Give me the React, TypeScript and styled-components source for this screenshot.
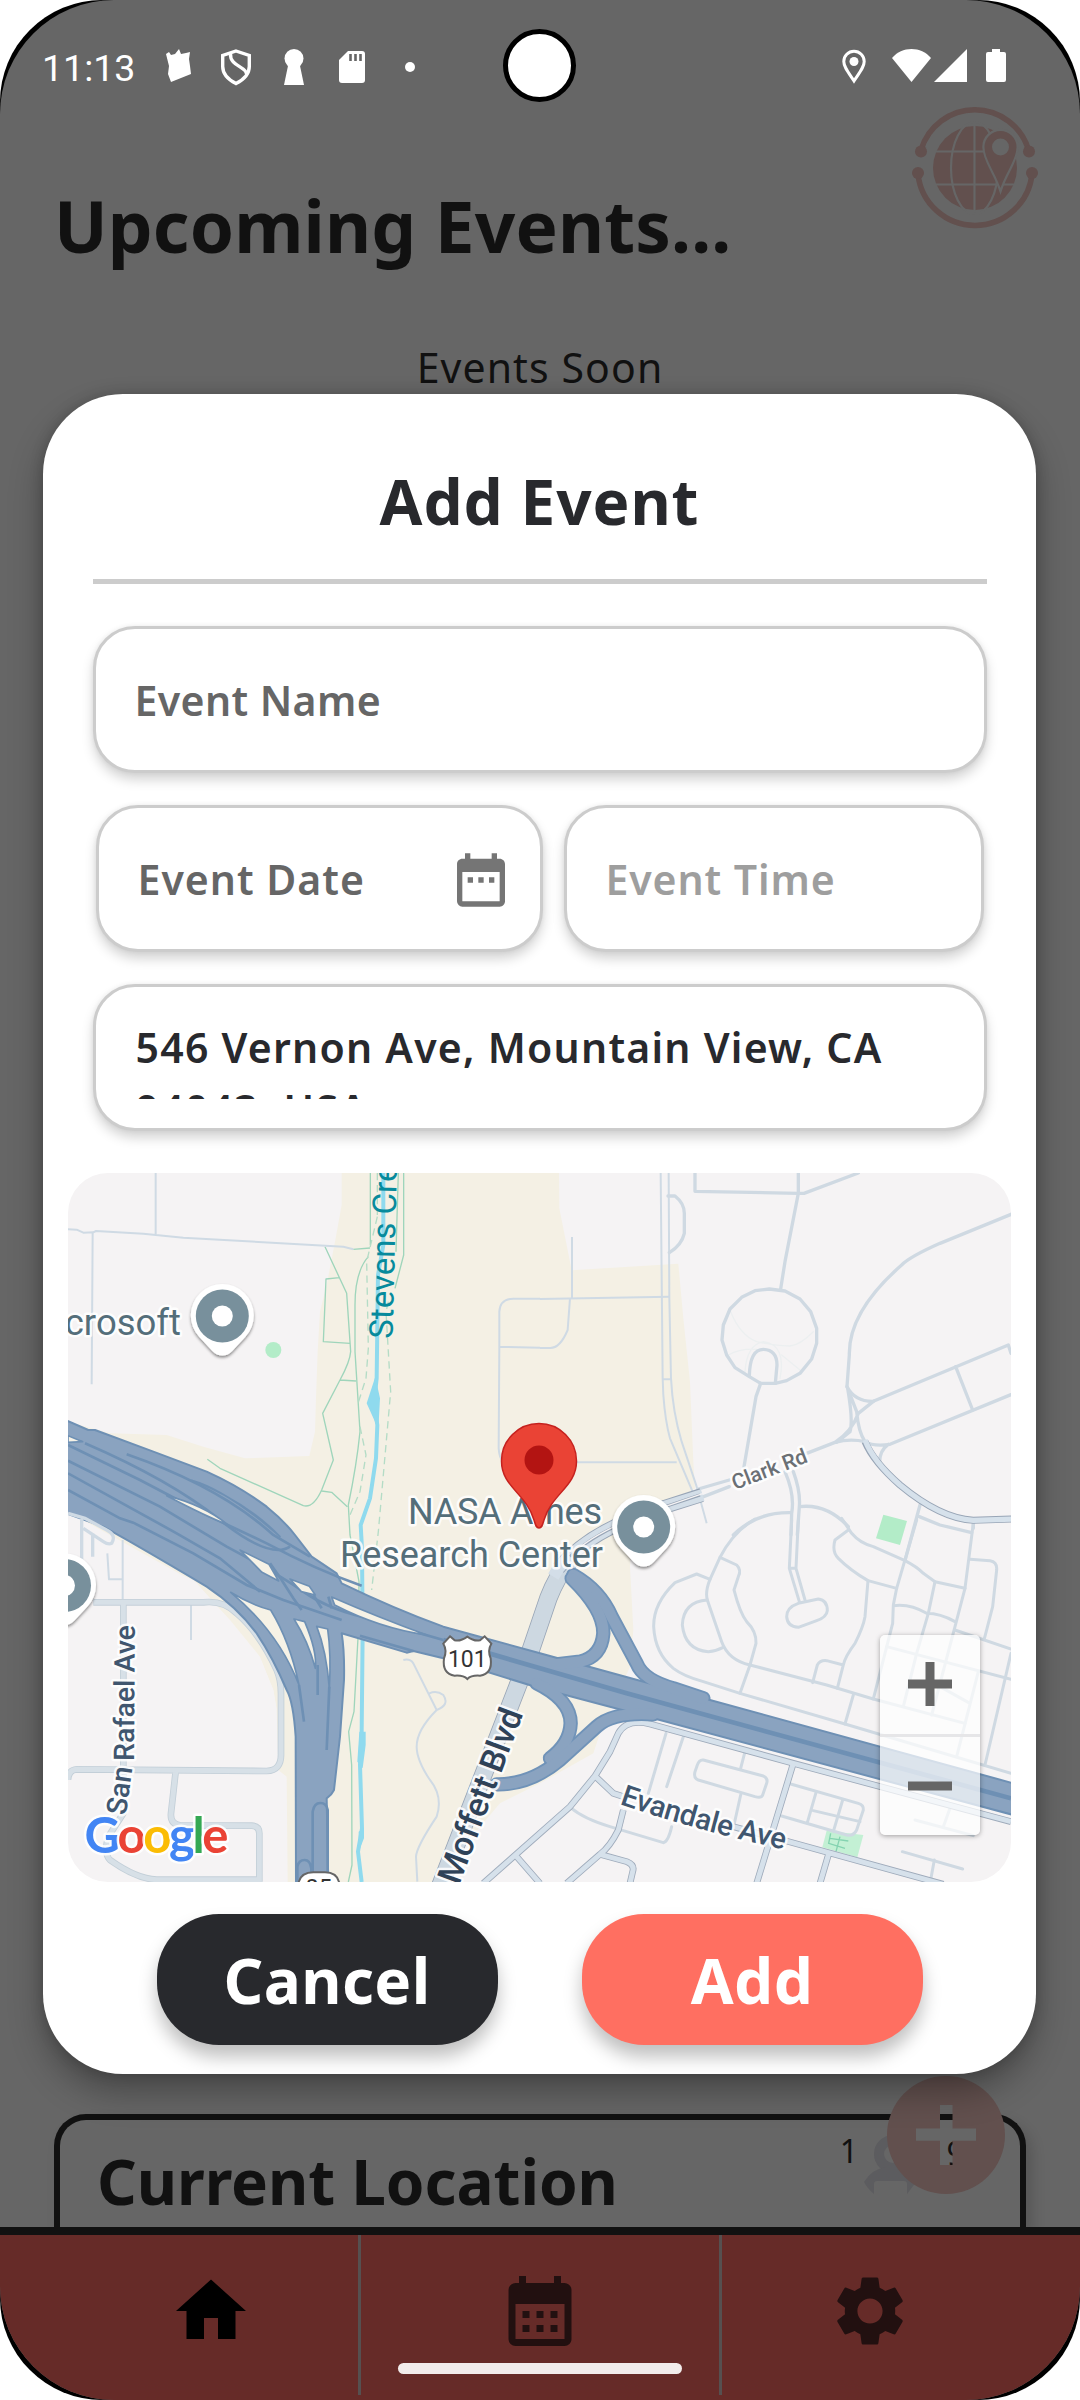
import React from "react";
import styled, { createGlobalStyle } from "styled-components";
import { MdHome, MdCalendarMonth, MdSettings, MdDateRange } from "react-icons/md";

const GlobalStyle = createGlobalStyle`
  * { box-sizing: border-box; }
  html, body { margin: 0; padding: 0; background: #fff; }
`;

const Device = styled.div`
  position: relative;
  width: 1080px;
  height: 2400px;
  background: #000;
  border-radius: 102px;
  overflow: hidden;
  font-family: "Noto Sans", "Open Sans", sans-serif;
`;

const Screen = styled.div`
  position: relative;
  display: flex;
  flex-direction: column;
  width: 1080px;
  height: 2400px;
  border-radius: 114px;
  overflow: hidden;
  background: #666;
  color: #111;
`;

const StatusBar = styled.div`
  display: flex;
  justify-content: space-between;
  align-items: center;
  height: 134px;
  padding: 0 74px 0 42px;
  flex: none;
`;

const StatusGroup = styled.div`
  display: flex;
  align-items: center;
`;

const Clock = styled.span`
  font-family: Roboto, sans-serif;
  font-size: 37.5px;
  line-height: 44px;
  width: 92px;
  padding-top: 1px;
  color: #fff;
  white-space: nowrap;
`;

const Glyph = styled.svg<{ $w: number; $gap: number }>`
  display: block;
  width: ${(p) => p.$w}px;
  height: 36px;
  margin-left: ${(p) => p.$gap}px;
  overflow: visible;
`;

const Camera = styled.div`
  position: absolute;
  left: 503px;
  top: 29px;
  width: 73px;
  height: 73px;
  border-radius: 50%;
  border: 5px solid #000;
  background: #fff;
`;

const Header = styled.header`
  display: flex;
  align-items: center;
  height: 184px;
  padding-left: 54px;
  flex: none;
`;

const PageTitle = styled.h1`
  margin: 0;
  font-size: 71px;
  line-height: 90px;
  font-weight: 700;
  letter-spacing: 0.15px;
  white-space: nowrap;
`;

const BrandMark = styled.svg`
  position: absolute;
  left: 905px;
  top: 100px;
  width: 140px;
  height: 136px;
`;

const Upcoming = styled.p`
  margin: 19px 0 0;
  text-align: center;
  font-size: 41px;
  line-height: 60px;
  letter-spacing: 1.1px;
  flex: none;
`;

const Spacer = styled.div`
  flex: 1;
`;

const LocationCard = styled.section`
  display: flex;
  justify-content: space-between;
  height: 113px;
  margin: 0 54px;
  padding: 18px 162px 0 37px;
  border: 6px solid #111;
  border-bottom: 0;
  border-radius: 32px 32px 0 0;
  box-shadow: 6px 8px 14px rgba(0, 0, 0, 0.16);
  flex: none;
`;

const CardTitle = styled.h2`
  margin: 2px 0 0;
  font-size: 62px;
  line-height: 82px;
  font-weight: 700;
  letter-spacing: -0.05px;
  white-space: nowrap;
`;

const CardCount = styled.span`
  font-size: 32px;
  line-height: 26px;
`;

const AddFab = styled.svg`
  position: absolute;
  left: 860px;
  top: 2070px;
  width: 150px;
  height: 130px;
`;

const Nav = styled.nav`
  display: grid;
  grid-template-columns: 358px 361px 1fr;
  height: 173px;
  border-top: 8px solid #111;
  background: #662b28;
  padding-bottom: 5px;
  flex: none;
`;

const NavItem = styled.div<{ $active?: boolean; $before?: number; $after?: number }>`
  display: flex;
  justify-content: center;
  padding: 34px ${(p) => p.$after ?? 0}px 0 ${(p) => p.$before ?? 0}px;
  font-size: 84px;
  color: ${(p) => (p.$active ? "#000" : "#221010")};
  & + & {
    border-left: 3px solid #565050;
  }
`;

const HomeHandle = styled.div`
  position: absolute;
  left: 398px;
  top: 2363px;
  width: 284px;
  height: 11px;
  border-radius: 6px;
  background: #f2eceb;
`;

const ModalLayer = styled.div`
  position: absolute;
  inset: 0;
  display: flex;
  justify-content: center;
  align-items: flex-start;
  padding: 394px 1px 0 0;
`;

const Modal = styled.div`
  display: flex;
  flex-direction: column;
  align-items: center;
  width: 993px;
  height: 1680px;
  border-radius: 80px;
  background: #fff;
  color: #28292d;
  box-shadow: 0 18px 34px rgba(0, 0, 0, 0.3), 0 0 14px rgba(0, 0, 0, 0.18);
`;

const ModalTitle = styled.h2`
  margin: 67px 0 0;
  font-size: 62px;
  line-height: 80px;
  font-weight: 700;
  letter-spacing: 0.9px;
`;

const Divider = styled.div`
  width: 894px;
  height: 5px;
  margin-top: 38px;
  background: #ccc;
`;

const Form = styled.div`
  display: flex;
  flex-direction: column;
  align-items: center;
  width: 894px;
  gap: 32px;
  margin-top: 42px;
`;

const FieldRow = styled.div`
  display: flex;
  width: 888px;
  gap: 21px;
`;

const Field = styled.div<{ $w: number; $color: string; $tracking: number; $top?: boolean }>`
  display: flex;
  align-items: ${(p) => (p.$top ? "flex-start" : "center")};
  justify-content: space-between;
  width: ${(p) => p.$w}px;
  height: 147px;
  padding: ${(p) => (p.$top ? "29px" : "0")} 27px 0 39px;
  border: 3px solid #ccc;
  border-radius: 42px;
  background: #fff;
  color: ${(p) => p.$color};
  font-size: 41px;
  font-weight: 600;
  line-height: 62px;
  letter-spacing: ${(p) => p.$tracking}px;
  box-shadow: 0 7px 12px rgba(0, 0, 0, 0.17), 0 0 5px rgba(0, 0, 0, 0.06);
`;

const Address = styled.div`
  width: 800px;
  height: 83px;
  padding-left: 1px;
  overflow: hidden;
`;

const CalendarIcon = styled(MdDateRange)`
  font-size: 64px;
  margin-top: 2px;
  color: #757575;
`;

const MapBox = styled.div`
  position: relative;
  width: 943px;
  height: 709px;
  margin-top: 42px;
  border-radius: 40px;
  overflow: hidden;
  background: #f5f3f4;
`;

const MapDrawing = styled.svg`
  display: block;
  width: 943px;
  height: 709px;
  font-family: Roboto, sans-serif;
`;

const ZoomPanel = styled.div`
  position: absolute;
  right: 31px;
  bottom: 47px;
  display: flex;
  flex-direction: column;
  width: 100px;
  height: 200px;
  border-radius: 5px;
  background: rgba(255, 255, 255, 0.7);
  box-shadow: 0 1px 5px rgba(0, 0, 0, 0.35);
`;

const ZoomButton = styled.div`
  display: flex;
  align-items: center;
  justify-content: center;
  flex: 1;
  & + & {
    border-top: 3px solid #e6e6e8;
  }
`;

const Actions = styled.div`
  display: flex;
  gap: 84px;
  margin-top: 32px;
`;

const ActionButton = styled.button<{ $bg: string }>`
  width: 341px;
  height: 131px;
  border: 0;
  border-radius: 62px;
  background: ${(p) => p.$bg};
  color: #fff;
  font-family: inherit;
  font-size: 62px;
  font-weight: 700;
  line-height: 80px;
  letter-spacing: 0.4px;
  padding: 0;
  box-shadow: 0 12px 18px rgba(0, 0, 0, 0.25);
`;

function StatusIcons() {
  return (
    <StatusGroup>
      <Clock>11:13</Clock>
      <Glyph $w={25} $gap={32} viewBox="0 0 25 36" fill="#fff">
        <path d="M0 5l3-2 2 3 4-1 4-5 2 5 5-1 4-1-1 7 1 7 1 8-20 8-3-8 1-8z" />
      </Glyph>
      <Glyph $w={30} $gap={30} viewBox="0 0 30 36" fill="none" stroke="#fff" strokeWidth="3.400">
        <path d="M15 2L28.300 6.500v11c0 8-5.300 13-13.300 17C7 30.500 1.700 25.500 1.700 17.500v-11z" />
        <path d="M9.500 4.500c-1 13 16 13 16 20.500" />
      </Glyph>
      <Glyph $w={20} $gap={33} viewBox="0 0 20 36" fill="#fff">
        <circle cx="10" cy="9.5" r="9.5" />
        <path d="M5 12h10l5 24H0z" />
      </Glyph>
      <Glyph $w={26} $gap={35} viewBox="0 0 26 36" fill="#fff">
        <path d="M9 2h14a3 3 0 013 3v26a3 3 0 01-3 3H3a3 3 0 01-3-3V11z" />
        <path d="M11.5 5v7M16.500 5v7M21.500 5v7" stroke="#666" strokeWidth="2.600" />
      </Glyph>
      <Glyph $w={10} $gap={40} viewBox="0 0 10 36" fill="#fff">
        <circle cx="5" cy="18" r="5" />
      </Glyph>
    </StatusGroup>
  );
}

function SystemIcons() {
  return (
    <StatusGroup>
      <Glyph $w={24} $gap={0} viewBox="0 0 24 36">
        <path d="M12 32C6 23 1.800 18 1.800 12.500a10.200 10.200 0 0120.400 0C22.200 18 18 23 12 32z" fill="none" stroke="#fff" strokeWidth="3" />
        <circle cx="12" cy="12.500" r="4.500" fill="#fff" />
      </Glyph>
      <Glyph $w={39} $gap={26} viewBox="0 0 39 36" fill="#fff">
        <path d="M0 9C5 3 12 0 19.500 0S34 3 39 9L19.500 33z" />
      </Glyph>
      <Glyph $w={33} $gap={3} viewBox="0 0 33 36" fill="#fff">
        <path d="M33 0v33H0z" />
      </Glyph>
      <Glyph $w={20} $gap={19} viewBox="0 0 20 36" fill="#fff">
        <path d="M6 0h8v3h4a2 2 0 012 2v26a2 2 0 01-2 2H2a2 2 0 01-2-2V5a2 2 0 012-2h4z" />
      </Glyph>
    </StatusGroup>
  );
}

function Brand() {
  return (
    <BrandMark viewBox="905 100 140 136">
      <g fill="none" stroke="#62504e" strokeWidth="5.600">
        <path d="M921 150A56 56 0 011028.500 150" />
        <path d="M918 174A57.300 57.300 0 001032 174" />
      </g>
      <g fill="#62504e">
        <circle cx="921" cy="151.500" r="6" />
        <circle cx="1029" cy="151.500" r="6" />
        <circle cx="918" cy="173" r="6" />
        <circle cx="1032" cy="173" r="6" />
        <circle cx="975" cy="168" r="42" />
      </g>
      <g fill="none" stroke="#666" strokeWidth="2.200">
        <path d="M974.500 125v86M931 151.500h88M931 184.500h88" />
        <ellipse cx="974.500" cy="168" rx="23.500" ry="46" />
      </g>
      <path
        d="M1000.500 188C995 172 984.500 159 984.500 147a16 16 0 0132 0C1016.500 159 1006 172 1000.500 188z"
        fill="#62504e"
        stroke="#666"
        strokeWidth="4.500"
        paintOrder="stroke"
      />
      <circle cx="1000.500" cy="147" r="8.500" fill="#666" />
    </BrandMark>
  );
}

function Fab() {
  return (
    <AddFab viewBox="860 2070 150 130">
      <defs>
        <mask id="plusCut">
          <rect x="860" y="2070" width="150" height="130" fill="#fff" />
          <path d="M940 2105h12.500v23.500H976v12.200h-23.500V2165H940v-24.300h-24v-12.200h24z" fill="#000" />
        </mask>
      </defs>
      <circle cx="893" cy="2154" r="14" fill="none" stroke="#5c5c5f" strokeWidth="10" />
      <path d="M864 2182q8-13 22-15h12q12 2 18 15l-9 12v-10q0-3-3-3h-27q-3 0-3 3v10q-7-6-10-12z" fill="#5c5c5f" />
      <text x="946.500" y="2165" fontSize="32" fill="#111">9</text>
      <circle cx="946" cy="2135" r="59" fill="#62504e" mask="url(#plusCut)" />
    </AddFab>
  );
}

const MINOR = [
  "M287 24V210M24 193L50 194L70 203L100 202L108 198L250 206L370 218L850 245L880 253M98 202L95 658",
  "M1440 401H1360Q1320 401 1318 440V545L1440 548M1318 545L1316 850Q1318 880 1330 890",
  "M1440 402L1828 395M1536 216V400M1530 400L1523 495Q1500 550 1470 549H1440",
  "M1802 24L1808 640L1810 690Q1816 770 1830 820L1900 985M1826 24L1828 400L1833 640Q1838 740 1865 830L1910 965L1940 1075M1808 643H1833M1550 892H1850",
  "M188 1125V1305M142 1165L147 1243H190M393 1320V1425",
  "M1030 1485Q1050 1480 1060 1495L1130 1635Q1070 1695 1070 1745Q1070 1785 1110 1845Q1150 1895 1130 1955Q1070 2045 1068 2075L1072 2150M1108 1585Q1130 1575 1150 1590Q1170 1620 1130 1635",
];

const STREETS_NORTH = [
  "M384 93H405Q433 115 433 145V205Q425 240 388 263M465 24V79L775 85H792L955 24M775 24V85L735 290L722 372",
  "M688 372L735 378L780 402L812 440L830 490V535L815 582L780 625L740 647L706 655H662L628 635L585 608L560 570L546 525L550 480L570 432L605 397L645 377Z",
  "M628 632Q630 553 670 553Q711 555 711 600L706 655M662 655L648 695L612 905",
  "M1413 148L1200 235Q1110 275 1085 300Q925 440 928 570L921 665Q945 710 1000 709L1405 540L1413 565M1247 605L1298 735",
  "M1413 689L1050 838Q1000 845 975 830Q930 820 885 832L800 865M921 665L950 740Q955 800 975 830M1000 709L955 745Q935 800 885 832M923 670Q940 770 930 800L890 832M1045 838Q1015 860 1020 900",
  "M735 920Q765 990 755 1045L753 1110M760 920Q782 980 778 1025L772 1110M1140 1020L1095 1187M1138 1055L1200 1080L1295 1103M1300 1073V1090M755 1043Q650 1040 580 1110M778 1025Q860 1015 925 1085",
  "M568 945L475 972M568 965L485 997",
];

const STREETS_SOUTH = [
  "M755 0L748 145L778 245M775 0L768 145L795 240M748 145H768M740 290Q740 262 775 250L835 237Q862 240 862 272Q860 292 830 302L775 322Q742 320 740 290",
  "M645 -3Q580 35 540 112L510 178Q495 215 502 240L545 365Q565 420 630 435L860 495L1000 537L1275 610",
  "M540 112L590 135Q605 150 595 170L582 210Q600 280 620 305Q650 335 648 370L630 435L600 520",
  "M510 178L470 162L405 188Q340 250 341 320Q345 400 400 445Q430 468 490 485L600 520L915 612L1413 760",
  "M502 240Q430 245 427 315Q435 390 505 395Q530 393 548 383M915 612L940 525M818 488L832 435Q840 420 860 422L910 435L892 505M910 435Q915 410 945 370Q970 320 975 290L984 182",
  "M905 -5L935 40Q960 70 1000 80L1095 122Q1130 140 1150 160L1185 185L1275 205M925 30L885 60Q875 95 895 115Q930 150 984 182L1070 205",
  "M1130 0L1070 205L1060 255L1058 310L1000 537M1060 257Q1110 250 1160 280Q1200 280 1245 305M1185 185L1165 280L1130 400L1090 560M1300 10L1275 205L1245 320L1175 585",
  "M1290 118L1350 122Q1372 125 1370 150L1358 260L1333 357M1245 330L1413 387M1040 380L1413 478M1413 400L1335 735M1315 455L1250 710M1200 500L1290 550",
  "M615 695L602 745M490 720L670 768Q685 775 680 790L668 825Q665 835 645 830L475 780Q460 775 465 755L472 735Q478 718 490 720M602 825L582 915",
  "M378 640L325 820M430 650L380 800M95 865Q130 895 210 920L370 968Q385 965 395 920",
  "M752 792L955 850Q972 855 970 870L950 930Q940 950 920 945L725 888M828 818L802 908M908 840L880 935M820 872L960 905M1087 995L1268 1047M1183 1020L1172 1080M1125 900L1300 947M1230 865L1210 920",
];

const CASED_SOUTH = [
  "M1413 905L760 730L330 612Q260 595 235 640L210 695L165 768L90 860L-170 1090",
  "M165 768L220 820L250 830M760 730L650 1090M1210 1093L735 962M580 920L735 962M865 1005L840 1090M250 870L235 930Q210 980 180 1003L80 1090M180 1003L260 1025Q285 1035 278 1055L270 1090M-70 1010L0 1090",
];

const CASED_WEST =
  "M100 1312H430Q490 1305 530 1345Q600 1405 650 1515Q663 1545 663 1585V1765Q665 1817 620 1818L50 1813Q25 1815 24 1845M190 1312V1813M347 1820L333 1945Q330 1977 360 1981L575 1982Q598 1983 598 2005V2150M190 1813V1945L145 2015Q130 2065 150 2085Q230 2142 290 2144H600";

const PARKING_WEST = "M24 1045L75 1060L140 1095Q170 1110 155 1135Q145 1140 130 1130L70 1090M65 1060V1190M98 1105V1175";

const TRAILS =
  "M931 24V240M1031 24V270L1005 370M1015 24L1008 260M795 245L860 385L872 560Q870 590 840 645L788 745L820 885L785 975Q760 1030 730 1022L480 910L442 883M838 338L798 342L790 530L870 535M880 253L930 249M925 275Q885 320 885 420V560L900 800Q890 900 865 1020L870 1110L897 1250L895 1400L882 1640L866 1700L875 1800L876 2100L865 2151M840 645L888 648M785 978L815 982L862 1025";

const HIGHWAY =
  "M10 762L85 795H105L280 860L440 920Q540 965 620 1025Q670 1065 705 1110L755 1175L830 1225L845 1255Q1000 1330 1150 1385L1440 1465L1950 1605L2860 1855V1950L1780 1660L1440 1570L1150 1480L1060 1458L1040 1463L845 1405Q854 1460 852 1545L840 1715L822 1875Q815 1890 800 1900L805 2160H708L707 1715Q700 1610 680 1575Q640 1480 590 1405Q530 1325 440 1265Q340 1205 210 1130L130 1085L10 1042Z";

const MOFFETT = "M1138 2170L1380 1545L1414 1450L1465 1300Q1490 1235 1530 1185";

const GAPS = [
  "M24 812L68 830L24 832Z",
  "M395 946Q500 975 660 1115Q560 1010 395 946Z",
  "M320 992Q430 1020 502 1078Q440 1055 320 992Z",
  "M540 1155L627 1198L656 1248L606 1222Z",
  "M690 1242L748 1264L766 1290L724 1280Z",
  "M815 1296Q950 1355 1100 1410Q960 1390 824 1320Z",
  "M512 1282Q570 1318 632 1335Q690 1430 717 1560Q655 1400 512 1282Z",
  "M702 1362L734 1370Q772 1460 766 1510Q745 1430 702 1362Z",
  "M770 1384L803 1392Q814 1470 808 1570Q800 1460 770 1384Z",
];

const LANES = [
  "M75 835Q330 945 480 1065T690 1145",
  "M24 840L240 945L440 1050L620 1135Q770 1215 905 1262",
  "M24 887L300 1025L500 1145Q660 1230 730 1280T905 1355L1150 1425",
  "M24 925L350 1105L480 1180L600 1280",
  "M24 975L180 1060L220 1073L400 1165L560 1260L670 1305L845 1365",
  "M200 868Q480 965 640 1110L750 1175",
  "M630 1195L665 1245L700 1300L725 1335",
  "M760 1290L785 1330M805 1295L815 1330",
  "M717 1560L732 1670M773 1500V1590M808 1565L800 1755",
  "M1060 1458L900 1412",
];

const RAMPS = [
  "M1540 1230Q1620 1275 1655 1355L1730 1495Q1750 1545 1840 1570L1930 1600",
  "M1535 1240Q1632 1335 1630 1405Q1625 1475 1560 1490L1490 1498",
  "M1430 1555Q1532 1605 1532 1675Q1530 1735 1470 1780",
  "M1310 1858Q1410 1860 1500 1785L1610 1685Q1660 1640 1780 1648",
];

function Poi({ x, y }: { x: number; y: number }) {
  return (
    <g transform={`translate(${x} ${y})`}>
      <path
        d="M0 39.500C-4 39.500-7 38-10 35L-23 21A31.500 31.500 0 1123 21L10 35C7 38 4 39.500 0 39.500z"
        fill="#fff"
        filter="url(#pinShadow)"
      />
      <circle r="26.500" fill="#78909c" />
      <circle r="10.500" fill="#fff" />
    </g>
  );
}

function MapView() {
  const halo = { stroke: "#fff", strokeWidth: 5, strokeOpacity: 0.85, paintOrder: "stroke", strokeLinejoin: "round" } as const;
  return (
    <MapBox>
      <MapDrawing viewBox="68 1173 943 709">
        <defs>
          <filter id="pinShadow" x="-30%" y="-30%" width="160%" height="160%">
            <feDropShadow dx="0" dy="2" stdDeviation="1.600" floodOpacity="0.45" />
          </filter>
          <path id="rafael" d="M126 1816Q130 1785 134 1758L135 1600" />
          <path id="evandale" d="M619.500 1804Q700 1832 805 1854" />
        </defs>
        <g transform="translate(60 1165) scale(0.33333)">
          <path
            d="M845 24V120L825 230L800 360L780 440L773 560L768 700L765 800L748 873L555 880L430 845L320 810L150 805L24 770V1090L400 1245L510 1365L600 1475L640 1575L650 1635L655 1815L680 1835L683 2151H1120L1320 1915L1440 1855L1600 1765L1620 1705L1710 1505L1720 1395L1710 1205L1715 1110L1905 970L1900 890L1890 650L1870 460L1855 296L1535 316L1498 130L1497 24Z"
            fill="#f4f0e4"
          />
          <path d="M24 1040L410 1255L520 1380L600 1480L640 1575L650 1635H24Z" fill="#f5f3f4" />
          <circle cx="640" cy="555" r="24" fill="#b3ecc8" />
          <path d="M2470 1049L2541 1068L2520 1140L2448 1120Z" fill="#b3ecc8" />
          <path d="M2300 1997L2410 2010L2392 2077L2287 2047Z" fill="#c3f0d4" />
          <path d="M2312 2005L2306 2035L2355 2050M2310 2020L2365 2028M2340 2015L2328 2060" stroke="#84d3b0" strokeWidth="4" fill="none" />
          <path d="M970 24V240L954 330L950 640L942 715L952 780L948 880L930 1000L902 1080L906 1150L908 1400L905 1700L900 1800L906 1990L894 2060L905 2151" stroke="#8fdaee" strokeWidth="12" fill="none" />
          <path d="M946 635L960 700L956 775L945 770L920 715ZM898 1700H917V1740L908 1810L892 1790ZM896 2000L912 1990V2020L896 2060Z" fill="#8fdaee" />
          <path d={TRAILS} stroke="#9fd5bb" strokeWidth="4" fill="none" strokeLinejoin="round" />
          <path d="M952 155L920 290L925 550L918 640L895 712M985 410L978 440L992 680L955 1100L935 1275M900 785L918 870L900 980L865 1062M952 24V150" stroke="#b4dcc6" strokeWidth="4" strokeDasharray="22 14" fill="none" />

          <g fill="none" stroke="#cfdae4" strokeWidth="6" strokeLinejoin="round">
            {MINOR.map((d) => <path key={d} d={d} />)}
          </g>
          <g fill="none" stroke="#cfd9e2" strokeWidth="10" strokeLinejoin="round" strokeLinecap="round">
            <g transform="translate(1440 0)">
              <path d="M572 440Q600 510 650 530Q690 540 750 543Q780 540 820 500M565 570Q600 550 650 553M725 570L780 615M615 620Q620 540 670 530Q740 540 720 640" stroke="#eceff0" strokeWidth="4" />
              {STREETS_NORTH.map((d) => <path key={d} d={d} />)}
            </g>
            <g transform="translate(1440 1065)" strokeWidth="9">
              {STREETS_SOUTH.map((d) => <path key={d} d={d} />)}
            </g>
          </g>

          <g fill="none" strokeLinejoin="round">
            <path d={CASED_WEST} stroke="#c3cfd8" strokeWidth="20" />
            <path d={CASED_WEST} stroke="#d7e0e7" strokeWidth="15" />
            <g transform="translate(1440 1065)">
              {CASED_SOUTH.map((d) => <path key={d} d={d} stroke="#9fabbb" strokeWidth="20" />)}
            </g>
            <g transform="translate(1440 1065)">
              {CASED_SOUTH.map((d) => <path key={d} d={d} stroke="#d6e1eb" strokeWidth="15" />)}
            </g>
            <path d="M2415 830Q2440 890 2520 960Q2640 1060 2740 1066L2860 1062" stroke="#98a5b6" strokeWidth="21" />
            <path d="M2415 825Q2440 890 2520 960Q2640 1060 2740 1066L2860 1062" stroke="#d6e1eb" strokeWidth="16" />
          </g>

          <g fill="none">
            <path d={MOFFETT} stroke="#98a5b6" strokeWidth="55" />
            <path d={MOFFETT} stroke="#cdd8e1" strokeWidth="50" />
          </g>

          <g fill="none" strokeLinejoin="round">
            {RAMPS.map((d) => <path key={d} d={d} stroke="#7093b8" strokeWidth="43" strokeLinecap="round" />)}
          </g>
          <path d={HIGHWAY} fill="#8aa3c0" stroke="#6e90b4" strokeWidth="6" strokeLinejoin="round" />
          <g fill="none">
            {RAMPS.map((d) => <path key={d} d={d} stroke="#8aa3c0" strokeWidth="32" strokeLinecap="round" />)}
          </g>
          <g fill="none" stroke="#6e90b4" strokeWidth="8">
            {LANES.map((d) => <path key={d} d={d} />)}
            <path d="M1150 1425L1440 1510L1700 1585L2853 1900" strokeWidth="14" />
            <path d="M758 2150V1940Q762 1914 781 1914Q800 1914 803 1935V2150M712 2150V2105Q716 2085 734 2085Q750 2085 754 2110V2150" />
          </g>
          <g fill="#f6f2e6" stroke="#6e90b4" strokeWidth="5" strokeLinejoin="round">
            {GAPS.map((d) => <path key={d} d={d} />)}
          </g>
          <path d={PARKING_WEST} fill="none" stroke="#cfdae4" strokeWidth="10" />

          <g fill="none">
            <path d="M1495 1210Q1590 1095 1800 1030L1925 990" stroke="#98a5b6" strokeWidth="42" />
            <path d="M1480 1235L1495 1210Q1590 1095 1800 1030L1928 990" stroke="#d3dee8" strokeWidth="36" />
            <path d="M1530 1175Q1610 1095 1800 1030L1920 990" stroke="#98a5b6" strokeWidth="9" />
            <path d="M1540 1165Q1610 1095 1800 1030L1930 985" stroke="#f5f3f4" strokeWidth="4" />
          </g>

          <g transform="translate(1222 1480)">
            <path
              d="M-52 -66L-38 -54Q-20 -50 0 -65Q20 -50 38 -54L52 -66L72 -44Q60 -24 70 0Q76 46 38 52Q12 50 0 62Q-12 50 -38 52Q-76 46 -70 0Q-60 -24 -72 -44Z"
              fill="#fff"
              stroke="#666"
              strokeWidth="6"
            />
            <text x="0" y="25" fontSize="69" textAnchor="middle" fill="#333">101</text>
          </g>
          <path d="M715 2155Q722 2122 760 2122H795Q832 2122 838 2155Z" fill="#fff" stroke="#666" strokeWidth="6" />
          <text x="776" y="2192" fontSize="70" textAnchor="middle" fill="#333">85</text>
        </g>

        <g fill="#546e7a" fontSize="36" {...halo}>
          <text x="181" y="1335" textAnchor="end" fontSize="36.500">crosoft</text>
          <text x="408" y="1524" textLength="194">NASA Ames</text>
          <text x="340" y="1567" textLength="263">Research Center</text>
        </g>
        <text transform="translate(392.500 1339) rotate(-88.500)" fontSize="33" fill="#078a9c">Stevens Cre</text>
        <g fontWeight="500" {...halo}>
          <text fontSize="28.500" fill="#40566f"><textPath href="#rafael">San Rafael Ave</textPath></text>
          <text fontSize="29.500" fill="#40566f"><textPath href="#evandale" textLength="171">Evandale Ave</textPath></text>
          <text transform="translate(459 1886) rotate(-69.500)" fontSize="34" fill="#2f4258" textLength="184">Moffett Blvd</text>
          <text transform="translate(735 1490) rotate(-21)" fontSize="21" fill="#6b7075">Clark Rd</text>
        </g>

        <Poi x={222.300} y={1316} />
        <Poi x={643.700} y={1527} />
        <Poi x={64.500} y={1585.500} />

        <path
          d="M539 1528C536 1528 535.500 1525 534 1520C526 1493 501.500 1487 501.500 1461A37.500 37.500 0 01576.500 1461C576.500 1487 552 1493 544 1520C542.500 1525 542 1528 539 1528z"
          fill="#ea4335"
          stroke="#c5221f"
          strokeWidth="1.500"
        />
        <circle cx="539" cy="1460" r="14.500" fill="#b31412" />

        <text x="84.500" y="1852.500" fontFamily="Lato, sans-serif" fontSize="49" fontWeight="700" textLength="144" {...halo}>
          <tspan fill="#4285f4">G</tspan>
          <tspan fill="#ea4335">o</tspan>
          <tspan fill="#fbbc04">o</tspan>
          <tspan fill="#4285f4">g</tspan>
          <tspan fill="#34a853">l</tspan>
          <tspan fill="#ea4335">e</tspan>
        </text>
      </MapDrawing>
      <ZoomPanel>
        <ZoomButton>
          <svg width="44" height="44" viewBox="0 0 44 44"><path d="M22 0v44M0 22h44" stroke="#666" strokeWidth="9" /></svg>
        </ZoomButton>
        <ZoomButton>
          <svg width="44" height="44" viewBox="0 0 44 44"><path d="M0 22h44" stroke="#666" strokeWidth="9" /></svg>
        </ZoomButton>
      </ZoomPanel>
    </MapBox>
  );
}

export default function App() {
  return (
    <>
      <GlobalStyle />
      <Device>
        <Screen>
          <StatusBar>
            <StatusIcons />
            <SystemIcons />
          </StatusBar>
          <Header>
            <PageTitle>Upcoming Events...</PageTitle>
          </Header>
          <Upcoming>Events Soon</Upcoming>
          <Spacer />
          <LocationCard>
            <CardTitle>Current Location</CardTitle>
            <CardCount>1</CardCount>
          </LocationCard>
          <Nav>
            <NavItem $active $before={64}><MdHome /></NavItem>
            <NavItem><MdCalendarMonth /></NavItem>
            <NavItem $after={62}><MdSettings /></NavItem>
          </Nav>
          <Brand />
          <Fab />
          <ModalLayer>
            <Modal>
              <ModalTitle>Add Event</ModalTitle>
              <Divider />
              <Form>
                <Field $w={894} $color="#666" $tracking={0.4}>Event Name</Field>
                <FieldRow>
                  <Field $w={447} $color="#666" $tracking={1}>
                    Event Date
                    <CalendarIcon />
                  </Field>
                  <Field $w={420} $color="#9e9e9e" $tracking={0.9}>Event Time</Field>
                </FieldRow>
                <Field $w={894} $color="#28292d" $tracking={1.25} $top>
                  <Address>546 Vernon Ave, Mountain View, CA 94043, USA</Address>
                </Field>
              </Form>
              <MapView />
              <Actions>
                <ActionButton $bg="#28292d">Cancel</ActionButton>
                <ActionButton $bg="#ff6f61">Add</ActionButton>
              </Actions>
            </Modal>
          </ModalLayer>
          <Camera />
          <HomeHandle />
        </Screen>
      </Device>
    </>
  );
}
